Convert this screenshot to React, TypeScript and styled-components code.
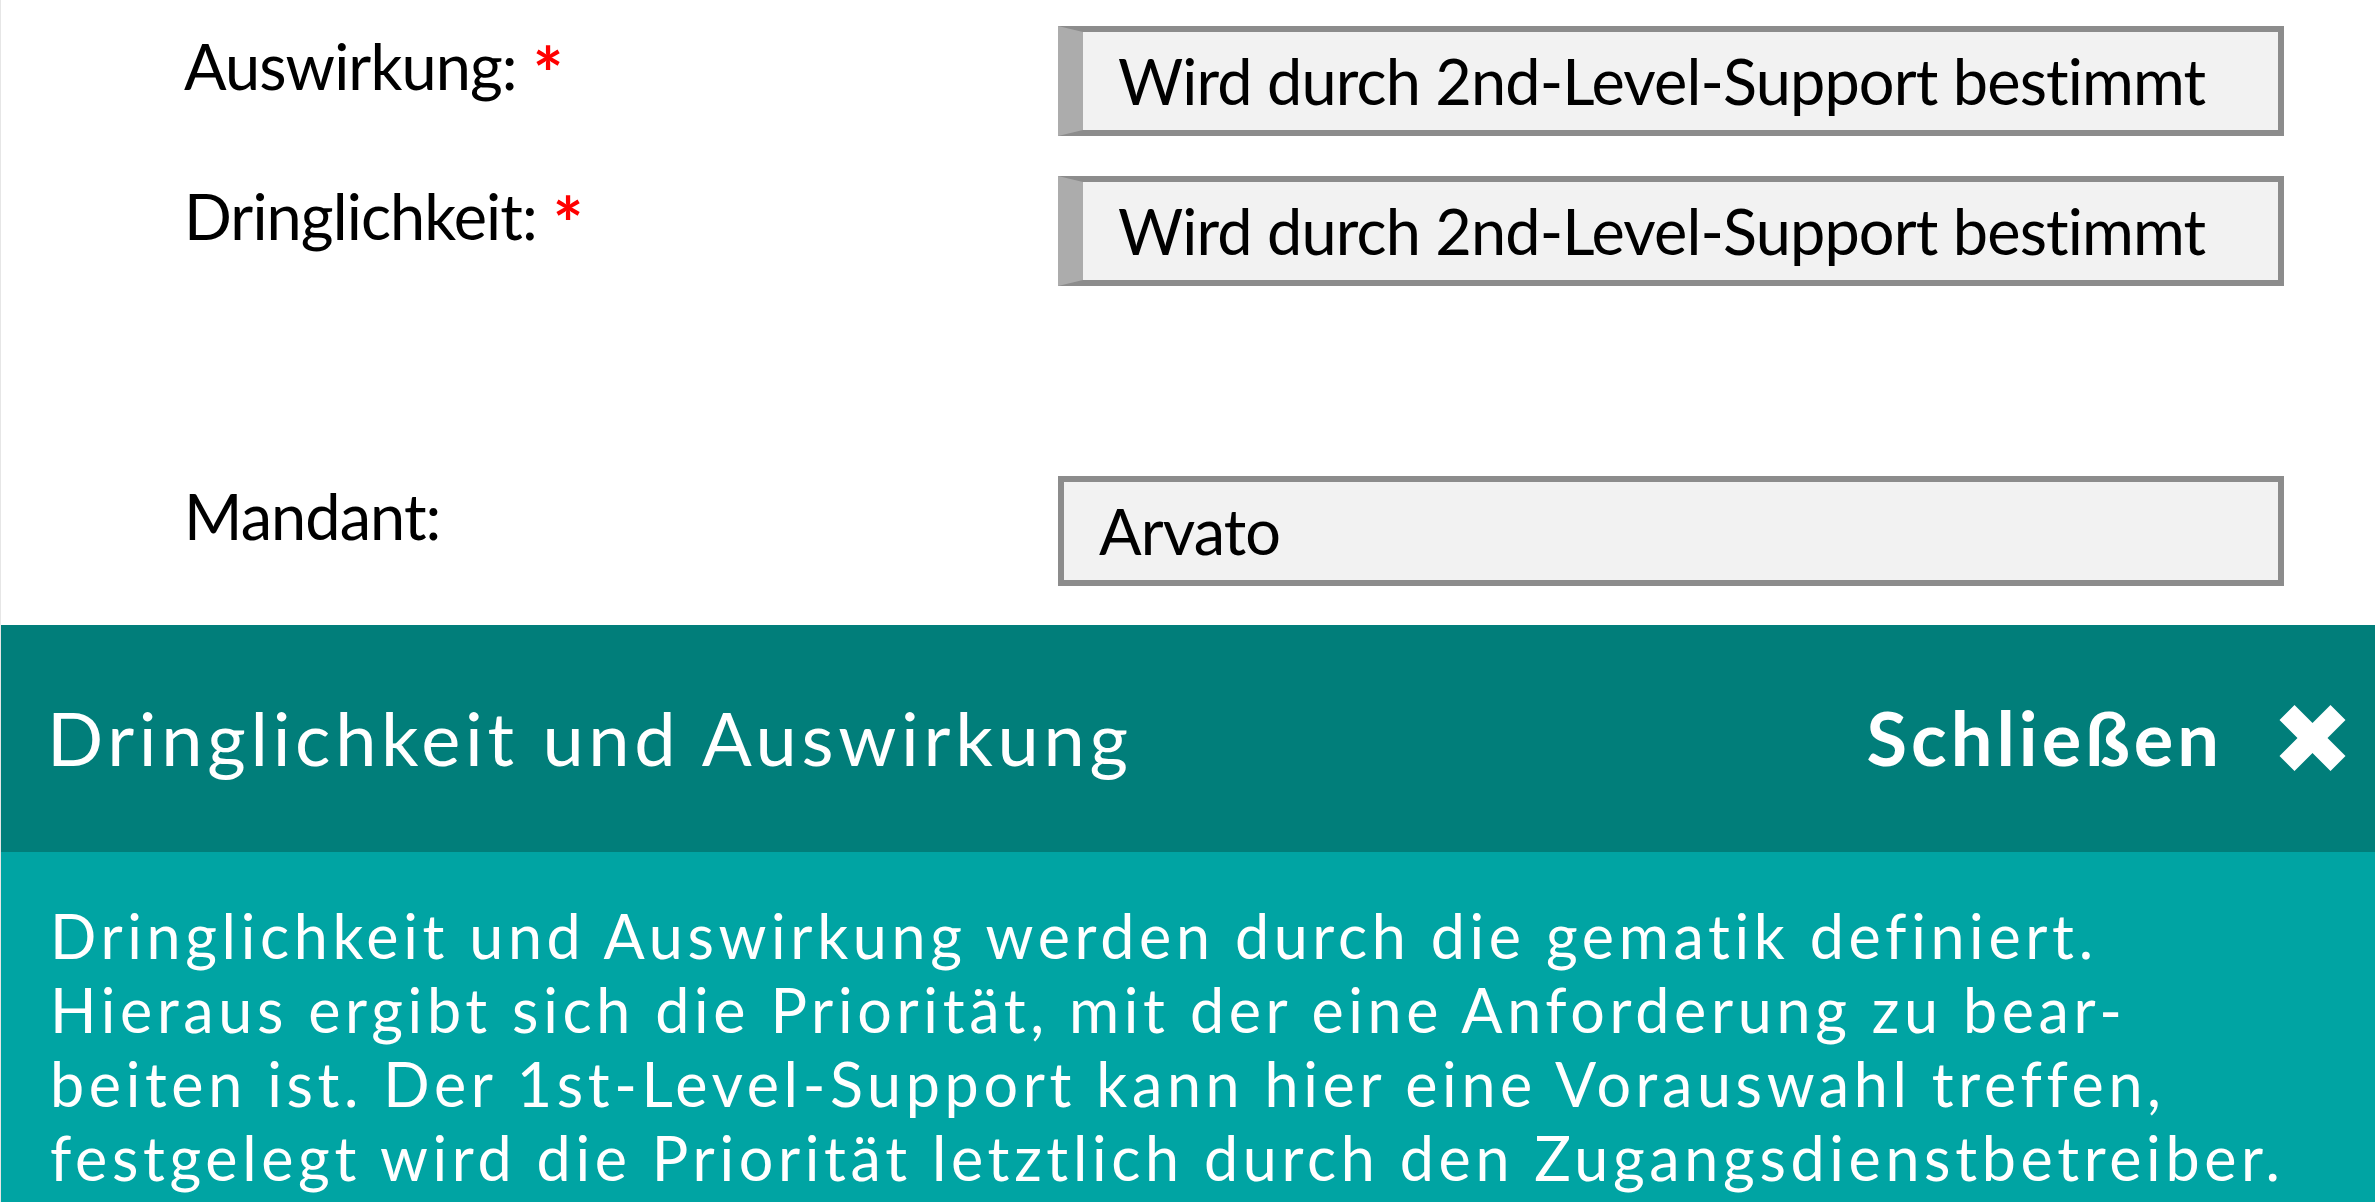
import React from "react";
import styled, { createGlobalStyle } from "styled-components";

const GlobalStyle = createGlobalStyle`
  html, body {
    margin: 0;
    padding: 0;
    background: #ffffff;
  }
  body {
    width: 2375px;
    height: 1202px;
    overflow: hidden;
  }
  * { box-sizing: border-box; }
`;

const Page = styled.div`
  width: 2375px;
  height: 1202px;
  display: flex;
  flex-direction: column;
  border-left: 1px solid #e6e6e6;
  background: #ffffff;
  font-family: Lato, "Noto Sans", sans-serif;
`;

const Form = styled.div`
  height: 625px;
  flex: none;
  padding: 26px 0 0 183px;
  display: grid;
  grid-template-columns: 874px 1226px;
  grid-auto-rows: 110px;
  row-gap: 40px;
  align-content: start;
`;

const Label = styled.div`
  align-self: start;
  padding-top: 2px;
  font-size: 63px;
  line-height: 1.2;
  color: #000000;
  letter-spacing: -0.9px;
  white-space: nowrap;
`;

const Required = styled.span`
  display: inline-block;
  color: #ff0000;
  font-weight: 700;
  font-size: 72px;
  line-height: 0;
  vertical-align: -11px;
  margin-left: 16px;
`;

const Field = styled.div<{ $locked?: boolean }>`
  height: 110px;
  background: #f2f2f2;
  border: 6px solid #8c8c8c;
  border-left: ${(p) => (p.$locked ? "25px solid #acacac" : "6px solid #8c8c8c")};
  display: flex;
  align-items: center;
  padding-left: 35px;
  font-size: 63px;
  line-height: 1.2;
  letter-spacing: -0.85px;
  color: #000000;
  white-space: nowrap;
  overflow: hidden;
`;

const EmptyRow = styled.div`
  grid-column: 1 / -1;
`;

const Panel = styled.section`
  flex: 1;
  display: flex;
  flex-direction: column;
  color: #ffffff;
`;

const Header = styled.header`
  height: 227px;
  flex: none;
  background: #017e7a;
  display: flex;
  align-items: center;
  justify-content: space-between;
  padding: 0 29px 0 46px;
`;

const Title = styled.h2`
  margin: 0;
  font-size: 74px;
  font-weight: 400;
  line-height: 1.2;
  letter-spacing: 4.7px;
  white-space: nowrap;
`;

const CloseButton = styled.button`
  display: flex;
  align-items: center;
  gap: 56px;
  margin: 0;
  padding: 0;
  border: none;
  background: transparent;
  color: #ffffff;
  font-family: inherit;
  font-size: 74px;
  font-weight: 700;
  line-height: 1.2;
  letter-spacing: 4px;
  cursor: pointer;
`;

const Body = styled.div`
  flex: 1;
  background: #00a4a3;
  padding: 47px 0 0 49px;
  font-size: 61px;
  line-height: 74px;
  letter-spacing: 4.65px;
  white-space: nowrap;
`;

const Line = styled.div``;

const CloseIcon = () => (
  <svg width="67" height="66" viewBox="0 0 66 66" aria-hidden="true">
    <polygon
      fill="#ffffff"
      points="15,0 33,18 51,0 66,15 48,33 66,51 51,66 33,48 15,66 0,51 18,33 0,15"
    />
  </svg>
);

const lines = [
  "Dringlichkeit und Auswirkung werden durch die gematik definiert.",
  "Hieraus ergibt sich die Priorität, mit der eine Anforderung zu bear-",
  "beiten ist. Der 1st-Level-Support kann hier eine Vorauswahl treffen,",
  "festgelegt wird die Priorität letztlich durch den Zugangsdienstbetreiber.",
];

export default function App() {
  return (
    <>
      <GlobalStyle />
      <Page>
        <Form>
          <Label>
            Auswirkung:<Required>*</Required>
          </Label>
          <Field $locked>Wird durch 2nd-Level-Support bestimmt</Field>
          <Label>
            Dringlichkeit:<Required>*</Required>
          </Label>
          <Field $locked>Wird durch 2nd-Level-Support bestimmt</Field>
          <EmptyRow />
          <Label>Mandant:</Label>
          <Field>Arvato</Field>
        </Form>
        <Panel>
          <Header>
            <Title>Dringlichkeit und Auswirkung</Title>
            <CloseButton type="button">
              Schließen
              <CloseIcon />
            </CloseButton>
          </Header>
          <Body>
            {lines.map((l) => (
              <Line key={l}>{l}</Line>
            ))}
          </Body>
        </Panel>
      </Page>
    </>
  );
}
